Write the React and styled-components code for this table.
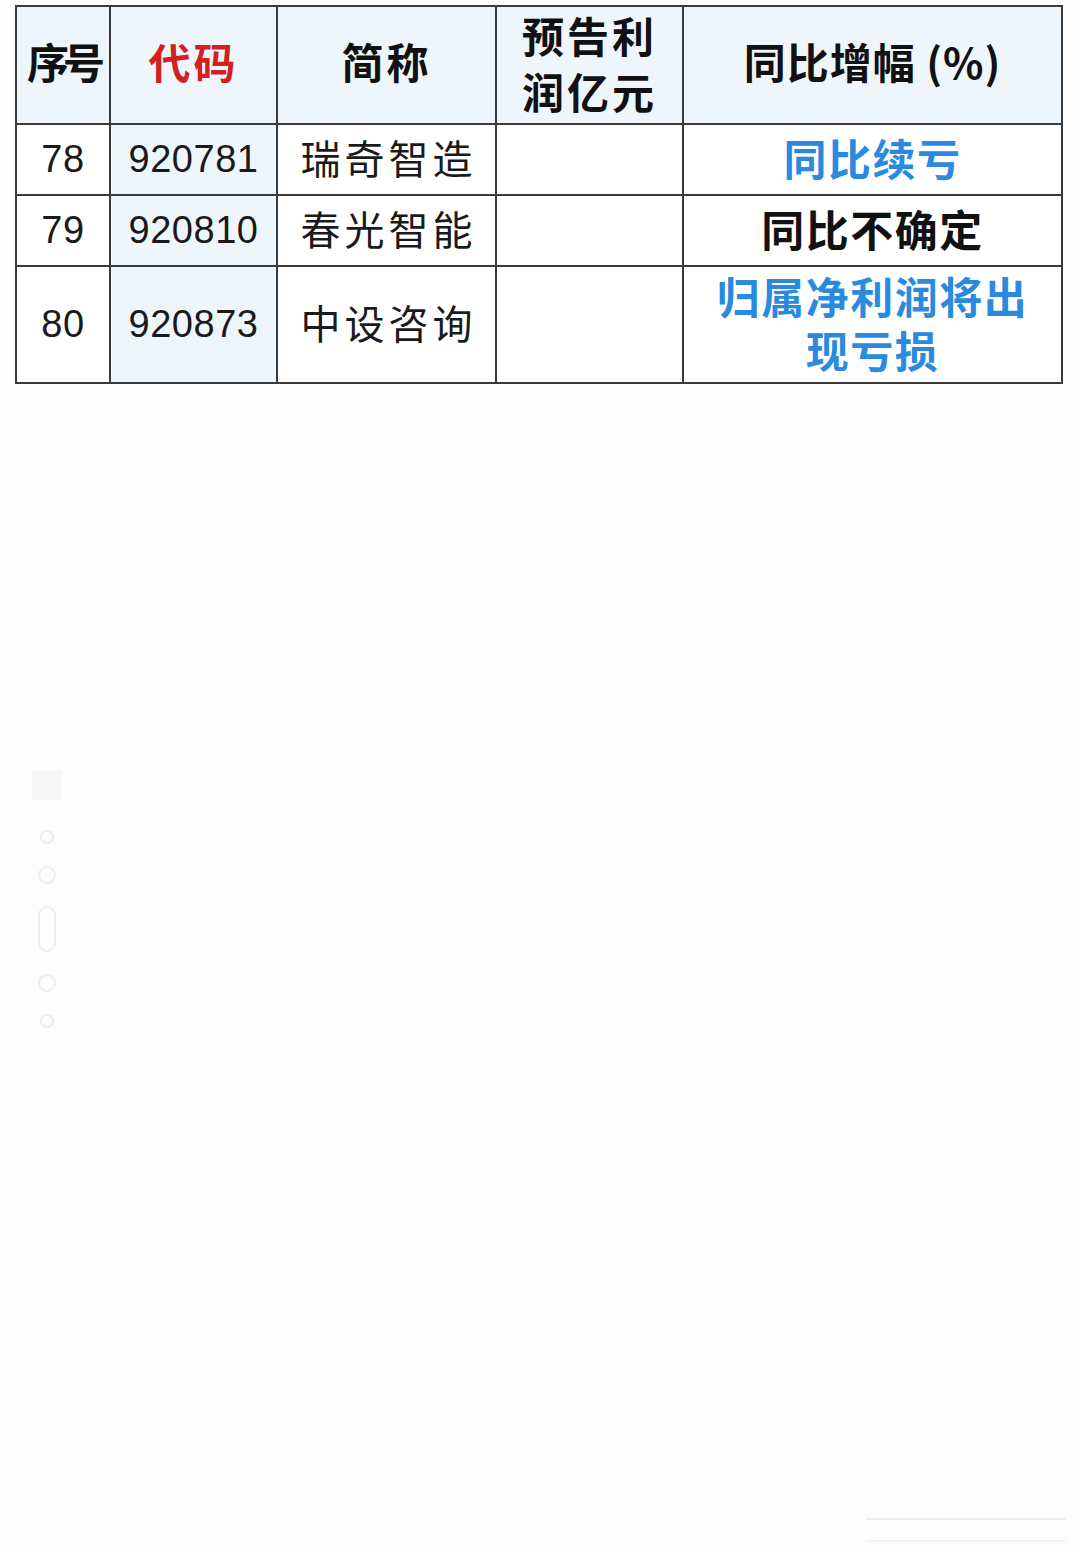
import styled, { createGlobalStyle } from "styled-components";

const GlobalStyle = createGlobalStyle`
  html, body {
    margin: 0;
    padding: 0;
    background: #fdfdfd;
  }
  body {
    width: 1080px;
    height: 1552px;
    overflow: hidden;
    font-family: "Noto Sans CJK SC", "Liberation Sans", sans-serif;
  }
`;

const Page = styled.div`
  position: relative;
  width: 1080px;
  height: 1552px;
  padding: 5px 0 0 15px;
  box-sizing: border-box;
`;

const Table = styled.table`
  border-collapse: collapse;
  table-layout: fixed;
  width: 1046px;
  border: 2px solid #3a3a3a;
`;

const HeadCell = styled.th`
  height: ${(p) => 116 - (p.$lift || 8)}px;
  padding: 0 0 ${(p) => p.$lift || 8}px;
  border: 2px solid #3a3a3a;
  background: #eef6fc;
  color: ${(p) => p.$color || "#111"};
  font-family: "Noto Sans CJK SC", sans-serif;
  font-weight: 700;
  font-size: 42px;
  line-height: 56px;
  letter-spacing: ${(p) => p.$spacing || "0"};
  text-align: center;
  vertical-align: middle;
`;

const Cell = styled.td`
  height: ${(p) => (p.$h || 69) - (p.$lift || 0)}px;
  padding: 0 0 ${(p) => p.$lift || 0}px;
  border: 2px solid #3a3a3a;
  background: ${(p) => (p.$tint ? "#eef6fc" : "#ffffff")};
  color: #1a1a1a;
  text-align: center;
  vertical-align: middle;
`;

const Num = styled.span`
  font-family: "Liberation Sans", Arial, sans-serif;
  font-size: 38px;
  letter-spacing: 0.5px;
`;

const Name = styled.span`
  font-family: "Noto Sans CJK SC", sans-serif;
  font-size: 40px;
  letter-spacing: 4px;
  margin-right: -4px;
`;

const Status = styled.div`
  font-family: "Noto Sans CJK SC", sans-serif;
  font-weight: 700;
  font-size: 43px;
  line-height: 54px;
  letter-spacing: 1.5px;
  color: ${(p) => (p.$blue ? "#2a8ae0" : "#111")};
`;

const SideDock = styled.div`
  position: absolute;
  left: 32px;
  top: 770px;
  display: flex;
  flex-direction: column;
  align-items: center;
  gap: 22px;
`;

const DockSquare = styled.div`
  width: 30px;
  height: 30px;
  background: #f6f6f6;
  margin-bottom: 8px;
`;

const DockDot = styled.div`
  width: ${(p) => p.$w}px;
  height: ${(p) => p.$h}px;
  border: 2px solid #ededed;
  border-radius: 10px;
`;

const BottomBar = styled.div`
  position: absolute;
  right: 14px;
  bottom: 10px;
  width: 200px;
  height: 20px;
  border-top: 2px solid #f0f0f0;
  border-bottom: 2px solid #f4f4f4;
`;

const rows = [
  { no: "78", code: "920781", name: "瑞奇智造", status: ["同比续亏"], blue: true, h: 69 },
  { no: "79", code: "920810", name: "春光智能", status: ["同比不确定"], blue: false, h: 69 },
  { no: "80", code: "920873", name: "中设咨询", status: ["归属净利润将出", "现亏损"], blue: true, h: 115 },
];

export default function App() {
  return (
    <Page>
      <GlobalStyle />
      <Table>
        <colgroup>
          <col style={{ width: 94 }} />
          <col style={{ width: 167 }} />
          <col style={{ width: 219 }} />
          <col style={{ width: 187 }} />
          <col style={{ width: 379 }} />
        </colgroup>
        <thead>
          <tr>
            <HeadCell $spacing="-6px">序号</HeadCell>
            <HeadCell $color="#d41f1f" $spacing="3px">代码</HeadCell>
            <HeadCell $spacing="3px">简称</HeadCell>
            <HeadCell $spacing="3px" $lift={4}>
              预告利
              <br />
              润亿元
            </HeadCell>
            <HeadCell $spacing="1px">同比增幅 (%)</HeadCell>
          </tr>
        </thead>
        <tbody>
          {rows.map((r) => (
            <tr key={r.no}>
              <Cell $h={r.h}>
                <Num>{r.no}</Num>
              </Cell>
              <Cell $h={r.h} $tint>
                <Num>{r.code}</Num>
              </Cell>
              <Cell $h={r.h} $lift={6}>
                <Name>{r.name}</Name>
              </Cell>
              <Cell $h={r.h}></Cell>
              <Cell $h={r.h} $lift={6}>
                {r.status.map((line) => (
                  <Status key={line} $blue={r.blue}>
                    {line}
                  </Status>
                ))}
              </Cell>
            </tr>
          ))}
        </tbody>
      </Table>
      <SideDock>
        <DockSquare />
        <DockDot $w={10} $h={10} />
        <DockDot $w={14} $h={14} />
        <DockDot $w={14} $h={42} />
        <DockDot $w={14} $h={14} />
        <DockDot $w={10} $h={10} />
      </SideDock>
      <BottomBar />
    </Page>
  );
}
